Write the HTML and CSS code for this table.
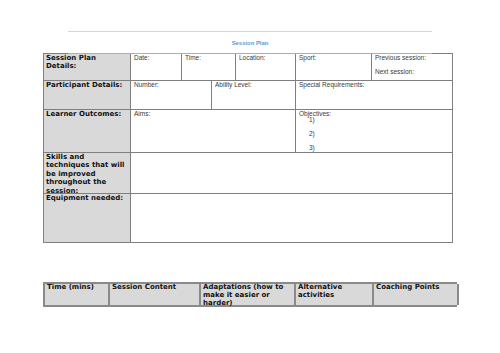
FILE: index.html
```html
<!DOCTYPE html>
<html>
<head>
<meta charset="utf-8">
<link rel="stylesheet" href="styles.css">
</head>
<body>
<div class="page">
  <div class="header"><span class="title">Session Plan</span></div>
  <div class="plan">
    <div class="row r1">
      <div class="cell label">Session Plan Details:</div>
      <div class="cell">Date:</div>
      <div class="cell">Time:</div>
      <div class="cell">Location:</div>
      <div class="cell">Sport:</div>
      <div class="cell stack"><span>Previous session:</span><span>Next session:</span></div>
    </div>
    <div class="row r2">
      <div class="cell label">Participant Details:</div>
      <div class="cell">Number:</div>
      <div class="cell">Ability Level:</div>
      <div class="cell">Special Requirements:</div>
    </div>
    <div class="row r3">
      <div class="cell label">Learner Outcomes:</div>
      <div class="cell">Aims:</div>
      <div class="cell objectives">
        <span>Objectives:</span>
        <ol class="obj-list"><li>1)</li><li>2)</li><li>3)</li></ol>
      </div>
    </div>
    <div class="row r4">
      <div class="cell label">Skills and techniques that will be improved throughout the session:</div>
      <div class="cell"></div>
    </div>
    <div class="row r5">
      <div class="cell label">Equipment needed:</div>
      <div class="cell"></div>
    </div>
  </div>
  <div class="activities">
    <div class="acell"><span class="atext">Time (mins)</span></div>
    <div class="acell"><span class="atext">Session Content</span></div>
    <div class="acell"><span class="atext">Adaptations (how to make it easier or harder)</span></div>
    <div class="acell"><span class="atext">Alternative activities</span></div>
    <div class="acell"><span class="atext">Coaching Points</span></div>
  </div>
</div>
</body>
</html>
```
FILE: styles.css
```css
* { box-sizing: border-box; }
html, body { margin: 0; padding: 0; background: #fff; }
body { width: 500px; height: 353px; overflow: hidden; font-family: "Liberation Sans", Arial, sans-serif; }
.page { padding-top: 31px; }
.header {
  margin: 0 68px -1px 68px;
  width: 364px;
  height: 23px;
  border-top: 1px solid #c9daf0;
  border-bottom: 1px solid #9bb1cc;
  position: relative;
  z-index: 1;
  display: flex;
  justify-content: center;
  align-items: center;
}
.title { font-size: 5.9px; font-weight: bold; color: #5b9bd5; line-height: 8px; padding-top: 1px; }
.plan {
  margin-left: 43px;
  width: 410px;
  border-top: 1px solid #7f7f7f;
  border-left: 1px solid #7f7f7f;
}
.row { display: grid; grid-template-rows: minmax(0, 1fr); }
.r1 { grid-template-columns: 87px 51px 54px 60px 76px 81px; height: 27px; }
.r2 { grid-template-columns: 87px 81px 84px 157px; height: 29px; }
.r3 { grid-template-columns: 87px 165px 157px; height: 43px; }
.r4 { grid-template-columns: 87px 322px; height: 41px; }
.r5 { grid-template-columns: 87px 322px; height: 49px; }
.cell {
  border-right: 1px solid #7f7f7f;
  border-bottom: 1px solid #7f7f7f;
  font-size: 6.5px;
  line-height: 7px;
  color: #3a3a3a;
  padding: 0 2px 0 3px;
  min-height: 0;
}
.cell.label {
  background: #d9d9d9;
  font-family: "DejaVu Sans", sans-serif;
  font-weight: bold;
  font-size: 7px;
  line-height: 8.4px;
  color: #111;
  padding: 0 2px 0 2px;
}
.stack { display: flex; flex-direction: column; gap: 7px; }
.objectives { display: flex; flex-direction: column; }
.obj-list { list-style: none; margin: -1px 0 0 0; padding: 0 0 0 10px; display: flex; flex-direction: column; gap: 7px; }
.activities {
  margin: 39px 0 0 43px;
  width: 414px;
  height: 25px;
  display: grid;
  grid-template-columns: 65px 91px 95px 78px 85px;
  grid-template-rows: minmax(0, 1fr);
  border: 2px solid #8a8a8a;
  border-right: 0;
  background: #d9d9d9;
}
.acell {
  border-right: 2px solid #8a8a8a;
  font-family: "DejaVu Sans", sans-serif;
  font-weight: bold;
  font-size: 7px;
  line-height: 8.2px;
  color: #111;
  padding: 0 3px 0 2px;
  min-height: 0;
}
.atext { display: block; margin-top: -1px; }
```
